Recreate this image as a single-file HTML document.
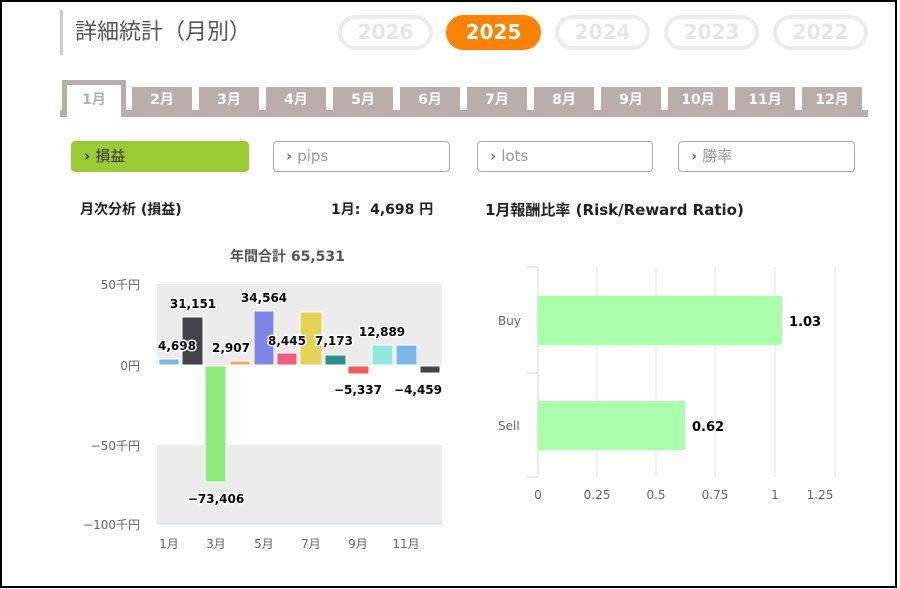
<!DOCTYPE html>
<html><head><meta charset="utf-8"><style>
*{margin:0;padding:0;box-sizing:border-box}
body{width:900px;height:589px;background:#fff;position:relative;overflow:hidden;font-family:"DejaVu Sans","Noto Sans CJK JP",sans-serif}
.a{position:absolute}
.frame{left:0;top:0;width:897px;height:588px;border:2px solid #000}
.pill{top:15px;height:35px;width:95px;border:4px solid #ececec;border-radius:18px;color:#e6e6e6;font-weight:bold;font-size:20px;text-align:center;line-height:27px}
.tab{top:87px;height:26px;width:60px;background:#b9aeac;color:#fff;font-weight:bold;font-size:14px;text-align:center;line-height:27px}
.btn{top:141px;height:31px;border:1.5px solid #aaa;border-radius:4px;color:#999;font-size:15px;line-height:28px;padding-left:12px}
.btn b{color:#777;margin-right:5px}
.h{font-weight:bold;font-size:14px;color:#222}
</style></head><body>
<div class="a frame"></div>
<div class="a" style="left:60px;top:10px;width:3px;height:45px;background:#ccc"></div>
<div class="a" style="left:75px;top:14px;font-size:22px;color:#555">詳細統計（月別）</div>
<div class="a pill" style="left:338px">2026</div>
<div class="a pill" style="left:446px;background:#ff8200;border-color:#ff8200;color:#fff">2025</div>
<div class="a pill" style="left:555px">2024</div>
<div class="a pill" style="left:664px">2023</div>
<div class="a pill" style="left:773px">2022</div>
<div class="a" style="left:60px;top:110px;width:808px;height:7px;background:#b9aeac"></div>
<div class="a" style="left:62px;top:80px;width:64px;height:37px;background:#b9aeac"></div>
<div class="a" style="left:67px;top:85px;width:54px;height:32px;background:#fff;color:#b9aeac;font-weight:bold;font-size:14px;text-align:center;line-height:30px">1月</div>
<div class="a tab" style="left:132px">2月</div>
<div class="a tab" style="left:199px">3月</div>
<div class="a tab" style="left:266px">4月</div>
<div class="a tab" style="left:333px">5月</div>
<div class="a tab" style="left:400px">6月</div>
<div class="a tab" style="left:467px">7月</div>
<div class="a tab" style="left:534px">8月</div>
<div class="a tab" style="left:601px">9月</div>
<div class="a tab" style="left:668px">10月</div>
<div class="a tab" style="left:735px">11月</div>
<div class="a tab" style="left:802px">12月</div>
<div class="a btn" style="left:71px;width:178px;background:#99cc33;border-color:#99cc33;color:#333"><b style="color:#333">›</b>損益</div>
<div class="a btn" style="left:273px;width:177px"><b>›</b>pips</div>
<div class="a btn" style="left:477px;width:176px"><b>›</b>lots</div>
<div class="a btn" style="left:678px;width:177px"><b>›</b>勝率</div>
<div class="a h" style="left:80px;top:199px">月次分析 (損益)</div>
<div class="a h" style="left:331px;top:199px">1月:&nbsp; 4,698 円</div>
<div class="a h" style="left:485px;top:199px;font-size:15px">1月報酬比率 (Risk/Reward Ratio)</div>
<div class="a" style="left:230px;top:246px;font-weight:bold;font-size:14px;color:#555">年間合計 65,531</div>
<svg class="a" style="left:0;top:0" width="900" height="589" font-family="DejaVu Sans, Noto Sans CJK JP, sans-serif">
<rect x="157" y="284" width="285" height="81" fill="#ececec"/>
<rect x="157" y="445" width="285" height="79" fill="#ececec"/>
<line x1="157" y1="524" x2="442" y2="524" stroke="#cdd8ee"/>
<g font-size="12" fill="#666" text-anchor="end">
<text x="140" y="289">50千円</text><text x="140" y="370">0円</text><text x="140" y="450">−50千円</text><text x="140" y="529">−100千円</text></g>
<g font-size="12" fill="#666" text-anchor="middle">
<text x="169" y="548">1月</text><text x="216" y="548">3月</text><text x="264" y="548">5月</text><text x="311" y="548">7月</text><text x="358" y="548">9月</text><text x="406" y="548">11月</text></g>
<g stroke="#fff" stroke-width="1">
<rect x="159" y="359" width="20" height="6" fill="#7cb5ec"/>
<rect x="182" y="317" width="21" height="48" fill="#434348"/>
<rect x="205" y="366" width="21" height="116" fill="#90ed7d"/>
<rect x="230" y="361" width="20" height="4" fill="#f7a35c"/>
<rect x="254" y="311" width="20" height="54" fill="#8085e9"/>
<rect x="277" y="353" width="20" height="12" fill="#f15c80"/>
<rect x="300" y="312" width="22" height="53" fill="#e4d354"/>
<rect x="325" y="355" width="21" height="10" fill="#2b908f"/>
<rect x="348" y="366" width="21" height="8" fill="#f45b5b"/>
<rect x="372" y="345" width="21" height="20" fill="#91e8e1"/>
<rect x="396" y="345" width="21" height="20" fill="#7cb5ec"/>
<rect x="420" y="366" width="20" height="7" fill="#434348"/>
</g>
<g font-size="12" font-weight="bold" fill="#000" stroke="#fff" stroke-width="3" paint-order="stroke" text-anchor="middle">
<text x="177" y="350">4,698</text><text x="193" y="308">31,151</text><text x="231" y="352">2,907</text><text x="264" y="302">34,564</text><text x="287" y="345">8,445</text><text x="334" y="345">7,173</text><text x="382" y="336">12,889</text><text x="216" y="503">−73,406</text><text x="358" y="394">−5,337</text><text x="418" y="394">−4,459</text></g>
<g stroke="#e6e6e6"><line x1="597" y1="267" x2="597" y2="477"/><line x1="656" y1="267" x2="656" y2="477"/><line x1="715" y1="267" x2="715" y2="477"/><line x1="775" y1="267" x2="775" y2="477"/><line x1="835" y1="267" x2="835" y2="477"/></g>
<path d="M527 267H538V477H527M527 373H538" fill="none" stroke="#ccd6eb"/>
<rect x="538" y="296" width="244" height="49" fill="#aaffaa"/>
<rect x="538" y="401" width="147" height="49" fill="#aaffaa"/>
<g font-size="12" fill="#666"><text x="498" y="325">Buy</text><text x="498" y="430">Sell</text></g>
<g font-size="13" font-weight="bold" fill="#000"><text x="789" y="326">1.03</text><text x="692" y="431">0.62</text></g>
<g font-size="12" fill="#666" text-anchor="middle"><text x="538" y="499">0</text><text x="597" y="499">0.25</text><text x="656" y="499">0.5</text><text x="715" y="499">0.75</text><text x="775" y="499">1</text><text x="820" y="499">1.25</text></g>
</svg>
</body></html>
